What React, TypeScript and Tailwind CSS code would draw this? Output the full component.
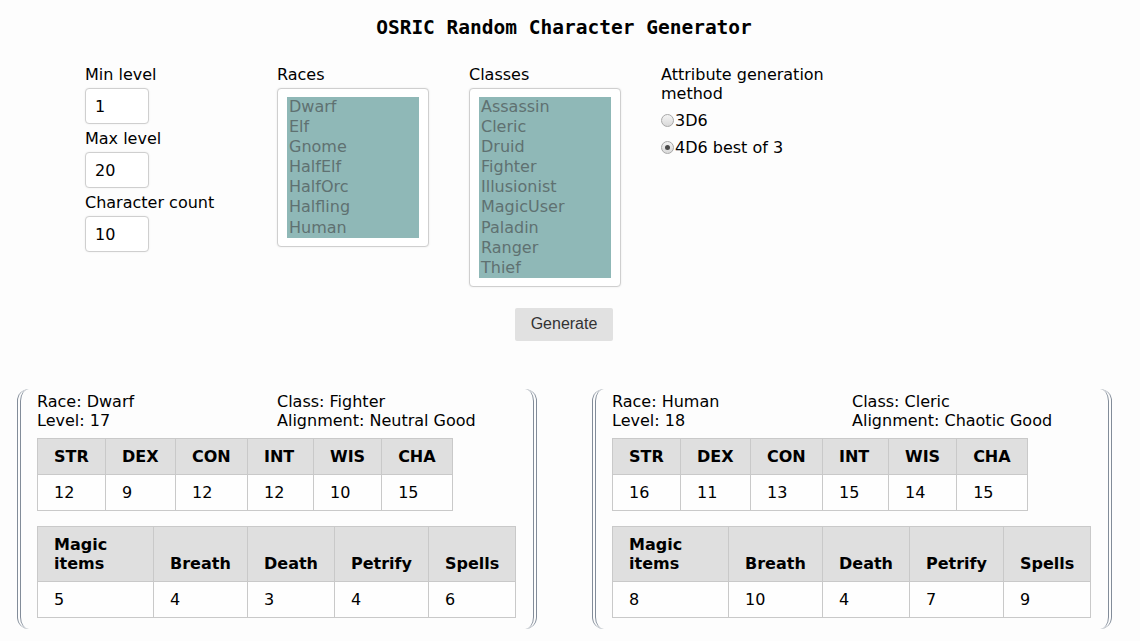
import React from "react";

const races = ["Dwarf", "Elf", "Gnome", "HalfElf", "HalfOrc", "Halfling", "Human"];
const classes = ["Assassin", "Cleric", "Druid", "Fighter", "Illusionist", "MagicUser", "Paladin", "Ranger", "Thief"];

type Character = {
    race: string
    level: number
    cls: string
    alignment: string
    stats: number[]
    saves: number[]
}

const characters: Character[] = [
    { race: "Dwarf", level: 17, cls: "Fighter", alignment: "Neutral Good", stats: [12, 9, 12, 12, 10, 15], saves: [5, 4, 3, 4, 6] },
    { race: "Human", level: 18, cls: "Cleric", alignment: "Chaotic Good", stats: [16, 11, 13, 15, 14, 15], saves: [8, 10, 4, 7, 9] },
];

const statCols = [
    { name: "STR", w: "w-[68px]" },
    { name: "DEX", w: "w-[70px]" },
    { name: "CON", w: "w-[72px]" },
    { name: "INT", w: "w-[66px]" },
    { name: "WIS", w: "w-[66px]" },
    { name: "CHA", w: "w-[70px]" },
];

const saveCols = [
    { name: "Magic items", w: "w-[116px]" },
    { name: "Breath", w: "w-[94px]" },
    { name: "Death", w: "w-[87px]" },
    { name: "Petrify", w: "w-[94px]" },
    { name: "Spells", w: "w-[87px]" },
];

const NumberField = ({ label, value }: { label: string, value: number }) => (
    <div className="flex flex-col">
        <label className="leading-[19px] mb-[4px]">{label}</label>
        <input
            readOnly
            value={value}
            className="w-[64px] h-[36px] mb-[5px] px-[9px] border border-[#cfcfcf] rounded-[4px] bg-white text-[16px] text-black outline-none shadow-[0_0_2px_rgba(0,0,0,0.08)]"
        />
    </div>
)

const MultiSelect = ({ label, options }: { label: string, options: string[] }) => (
    <div className="w-[192px] flex flex-col">
        <span className="leading-[19px] mb-[4px]">{label}</span>
        <div className="w-[152px] px-[9px] pt-[8px] pb-[8px] border border-[#cfcfcf] rounded-[4px] bg-white shadow-[0_0_2px_rgba(0,0,0,0.1)]">
            <div className="bg-[#8fb8b7]">
                {options.map((o) => (
                    <div key={o} className="h-[20.1px] leading-[20px] px-[2px] text-[#5f7171]">{o}</div>
                ))}
            </div>
        </div>
    </div>
)

const Radio = ({ label, checked }: { label: string, checked?: boolean }) => (
    <div className="flex items-center h-[19px]">
        <span className="w-[13px] h-[13px] rounded-full border border-[#a8a8a8] bg-gradient-to-b from-[#f4f4f4] to-[#d9d9d9] flex items-center justify-center">
            {checked && <span className="w-[5px] h-[5px] rounded-full bg-[#4a4a4a]" />}
        </span>
        <span className="ml-[1px]">{label}</span>
    </div>
)

const CharacterCard = ({ c }: { c: Character }) => (
    <div className="w-[520px] h-[240px] border-x-[4px] border-double border-[#828c99] rounded-[12px] pl-[16px] pr-[16px] pt-[3px]">
        <div className="grid grid-cols-[240px_1fr] leading-[19px]">
            <div>Race: {c.race}</div>
            <div>Class: {c.cls}</div>
            <div>Level: {c.level}</div>
            <div>Alignment: {c.alignment}</div>
        </div>

        {/* ability scores */}
        <table className="mt-[8px] border-collapse table-fixed leading-[19px]">
            <thead>
                <tr className="bg-[#dfdfdf]">
                    {statCols.map((s) => (
                        <th key={s.name} className={`${s.w} border border-[#c9c9c9] px-4 py-2 text-left font-bold`}>{s.name}</th>
                    ))}
                </tr>
            </thead>
            <tbody>
                <tr className="bg-[#fefefe]">
                    {c.stats.map((v, i) => (
                        <td key={i} className="border border-[#c9c9c9] px-4 py-2">{v}</td>
                    ))}
                </tr>
            </tbody>
        </table>

        {/* saving throws */}
        <table className="mt-[15px] w-[478px] border-collapse table-fixed leading-[19px]">
            <thead>
                <tr className="bg-[#dfdfdf]">
                    {saveCols.map((s) => (
                        <th key={s.name} className={`${s.w} border border-[#c9c9c9] px-4 py-2 text-left align-bottom font-bold`}>
                            {s.name === "Magic items" ? <>Magic<br />items</> : s.name}
                        </th>
                    ))}
                </tr>
            </thead>
            <tbody>
                <tr className="bg-[#fefefe]">
                    {c.saves.map((v, i) => (
                        <td key={i} className="border border-[#c9c9c9] px-4 py-2">{v}</td>
                    ))}
                </tr>
            </tbody>
        </table>
    </div>
)

export default function App() {
    return (
        <div className="w-[1140px] h-[641px] overflow-hidden bg-[#fdfdfd] text-[16px] text-black font-['DejaVu_Sans',sans-serif]">
            <div className="w-[1128px]">
                <h1 className="pt-[16px] text-center text-[19.5px] leading-[24px] font-bold font-['DejaVu_Sans_Mono',monospace]">
                    OSRIC Random Character Generator
                </h1>

                {/* ── Form ── */}
                <div className="mt-[25px] pl-[85px] flex items-start">
                    <div className="w-[192px] flex flex-col">
                        <NumberField label="Min level" value={1} />
                        <NumberField label="Max level" value={20} />
                        <NumberField label="Character count" value={10} />
                    </div>
                    <MultiSelect label="Races" options={races} />
                    <MultiSelect label="Classes" options={classes} />
                    <div className="w-[170px] flex flex-col leading-[19px]">
                        <span>Attribute generation method</span>
                        <div className="mt-[8px] flex flex-col gap-[8px]">
                            <Radio label="3D6" />
                            <Radio label="4D6 best of 3" checked />
                        </div>
                    </div>
                </div>

                <div className="mt-[21px] flex justify-center">
                    <button className="w-[98px] h-[33px] bg-[#e1e1e1] rounded-[2px] text-[#333] font-['Liberation_Sans',sans-serif]">
                        Generate
                    </button>
                </div>
            </div>

            {/* ── Results ── */}
            <div className="mt-[48px] pl-[17px] flex gap-[55px]">
                {characters.map((c, i) => (
                    <CharacterCard key={i} c={c} />
                ))}
            </div>
        </div>
    )
}
